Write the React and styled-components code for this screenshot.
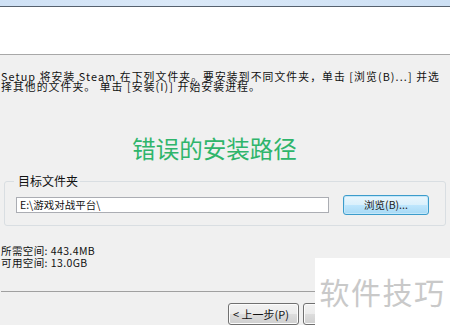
import React from 'react'
import styled, { createGlobalStyle } from 'styled-components'

const GlobalStyle = createGlobalStyle`
  html, body {
    margin: 0;
    padding: 0;
  }
  body {
    width: 450px;
    height: 325px;
    overflow: hidden;
    background: #f0f0f0;
    font-family: "Noto Sans CJK SC", "Liberation Sans", sans-serif;
    color: #000;
  }
`;

const Window = styled.div`
  position: relative;
  width: 450px;
  height: 325px;
  overflow: hidden;
  display: flex;
  flex-direction: column;
`;

const TitleStrip = styled.div`
  height: 7px;
  background: linear-gradient(to right, #cfe1f5, #dbe9f8 40%, #cde0f4);
  border-bottom: 1px solid #56616e;
`;

const Banner = styled.div`
  height: 52px;
  background: #ffffff;
  border-bottom: 1px solid #a8a8a8;
`;

const Content = styled.div`
  display: flex;
  flex-direction: column;
  padding: 0 4px 0 1px;
`;

const Intro = styled.p`
  margin: 16px 0 0;
  font-size: 10.8px;
  line-height: 10px;
  white-space: nowrap;
  letter-spacing: 1.1px;
  color: #111;
`;

const Heading = styled.h1`
  margin: 43px 0 0;
  text-align: center;
  font-size: 23.5px;
  line-height: 28px;
  font-weight: 400;
  color: #2fb56b;
  padding-right: 18px;
`;

const Group = styled.fieldset`
  margin: 12px 0 0 3px;
  padding: 7px 16px 10px 11px;
  border: 1px solid #d9dee2;
  border-radius: 3px;
  display: flex;
  align-items: center;
  justify-content: space-between;
`;

const Legend = styled.legend`
  font-size: 12px;
  line-height: 14px;
  padding: 0 2px 0 4px;
  margin-left: -2px;
  color: #111;
`;

const PathInput = styled.div`
  width: 313px;
  height: 16px;
  box-sizing: border-box;
  background: #fff;
  border: 1px solid #abadb3;
  font-size: 10.5px;
  line-height: 14px;
  padding-left: 3px;
  color: #111;
`;

const Browse = styled.button`
  width: 86px;
  height: 20px;
  border: 1px solid #3c9ccb;
  border-radius: 3px;
  background: linear-gradient(#eaf6fd, #d9f0fc 50%, #bee6fd 51%, #a7d9f5);
  box-shadow: inset 0 0 0 1px #c4e7f9;
  font-family: inherit;
  font-size: 10.5px;
  line-height: 14px;
  color: #222;
  padding: 0;
  cursor: pointer;
`;

const Space = styled.div`
  margin: 19px 0 0;
  font-size: 10.5px;
  line-height: 12px;
  letter-spacing: 0.4px;
  color: #111;
`;

const Separator = styled.hr`
  margin: 22px 0 0;
  border: none;
  border-top: 1px solid #a0a0a0;
  height: 0;
`;

const Footer = styled.div`
  display: flex;
  gap: 4px;
  margin: 11px 0 0 227px;
`;

const NavButton = styled.button`
  flex-shrink: 0;
  width: 71px;
  height: 22px;
  border: 1px solid #707070;
  border-radius: 3px;
  background: linear-gradient(#f2f2f2, #ebebeb 50%, #dddddd 51%, #cfcfcf);
  box-shadow: inset 0 0 0 1px #fcfcfc;
  font-family: inherit;
  font-size: 11px;
  line-height: 14px;
  color: #111;
  padding: 0 0 0 4px;
  text-align: left;
`;

const Watermark = styled.div`
  position: absolute;
  left: 315px;
  top: 258px;
  width: 135px;
  height: 67px;
  background: #ffffff;
  display: flex;
  align-items: center;
  justify-content: center;
  font-size: 30px;
  color: #c9c9c9;
  letter-spacing: 1.5px;
  padding-bottom: 2px;
  box-sizing: border-box;
`;

export default function App() {
  return (
    <Window>
      <GlobalStyle />
      <TitleStrip />
      <Banner />
      <Content>
        <Intro>
          Setup 将安装 Steam 在下列文件夹。要安装到不同文件夹，单击 [浏览(B)...] 并选
          <br />
          择其他的文件夹。 单击 [安装(I)] 开始安装进程。
        </Intro>
        <Heading>错误的安装路径</Heading>
        <Group>
          <Legend>目标文件夹</Legend>
          <PathInput>E:\游戏对战平台\</PathInput>
          <Browse>浏览(B)...</Browse>
        </Group>
        <Space>
          所需空间: 443.4MB
          <br />
          可用空间: 13.0GB
        </Space>
        <Separator />
        <Footer>
          <NavButton>&lt; 上一步(P)</NavButton>
          <NavButton />
        </Footer>
      </Content>
      <Watermark>软件技巧</Watermark>
    </Window>
  )
}
